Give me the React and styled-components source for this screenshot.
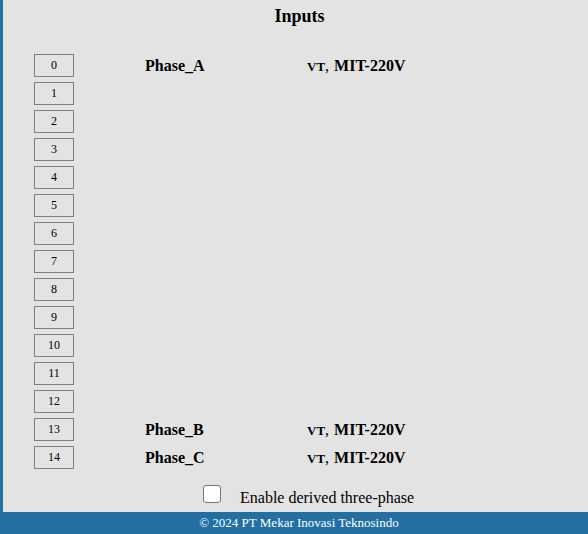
import React from "react";
import styled, { createGlobalStyle } from "styled-components";

const Global = createGlobalStyle`
  html, body { margin: 0; padding: 0; background: #e3e3e3; overflow: hidden; }
  body { font-family: "Liberation Serif", "Times New Roman", serif; color: #000; }
`;

const Page = styled.div`
  width: 588px;
  height: 534px;
  display: flex;
  flex-direction: column;
  box-sizing: border-box;
`;

const Main = styled.main`
  flex: 1;
  border-left: 3px solid #236fa1;
  display: flex;
  flex-direction: column;
  width: 596px;
  box-sizing: border-box;
`;

const Title = styled.h2`
  margin: 0;
  padding-top: 6px;
  height: 54px;
  box-sizing: border-box;
  text-align: center;
  font-size: 18px;
  font-weight: bold;
  line-height: 20px;
`;

const List = styled.div`
  display: flex;
  flex-direction: column;
  gap: 5px;
  padding-left: 31px;
`;

const Row = styled.div`
  display: grid;
  grid-template-columns: 40px 71px 162px auto;
  align-items: center;
  height: 23px;
`;

const Index = styled.div`
  grid-column: 1;
  height: 23px;
  box-sizing: border-box;
  border: 1px solid #808080;
  font-size: 12px;
  display: flex;
  align-items: center;
  justify-content: center;
`;

const Name = styled.div`
  grid-column: 3;
  font-size: 16px;
  font-weight: bold;
`;

const Kind = styled.div`
  grid-column: 4;
  font-size: 16px;
  font-weight: bold;
`;

const Small = styled.span`
  font-size: 13px;
  text-transform: uppercase;
`;

const Comma = styled.span`
  font-weight: normal;
  margin-right: 1px;
`;

const CheckRow = styled.label`
  display: flex;
  align-items: center;
  padding-left: 200px;
  margin-top: 16px;
  gap: 19px;
  font-size: 16px;
`;

const Box = styled.span`
  width: 18px;
  height: 18px;
  box-sizing: border-box;
  border: 1px solid #767676;
  border-radius: 3px;
  background: #fff;
  margin-bottom: 8px;
`;

const Footer = styled.footer`
  height: 22px;
  background: #236fa1;
  color: #fff;
  font-size: 13px;
  display: flex;
  align-items: center;
  justify-content: center;
  padding-left: 10px;
  margin-top: auto;
`;

const channels = {
  0: "Phase_A",
  13: "Phase_B",
  14: "Phase_C",
};

export default function App() {
  return (
    <Page>
      <Global />
      <Main>
        <Title>Inputs</Title>
        <List>
          {Array.from({ length: 15 }, (_, i) => (
            <Row key={i}>
              <Index>{i}</Index>
              {channels[i] && (
                <>
                  <Name>{channels[i]}</Name>
                  <Kind>
                    <Small>VT</Small>
                    <Comma>, </Comma>MIT-220V
                  </Kind>
                </>
              )}
            </Row>
          ))}
        </List>
        <CheckRow>
          <Box />
          Enable derived three-phase
        </CheckRow>
      </Main>
      <Footer>© 2024 PT Mekar Inovasi Teknosindo</Footer>
    </Page>
  );
}
